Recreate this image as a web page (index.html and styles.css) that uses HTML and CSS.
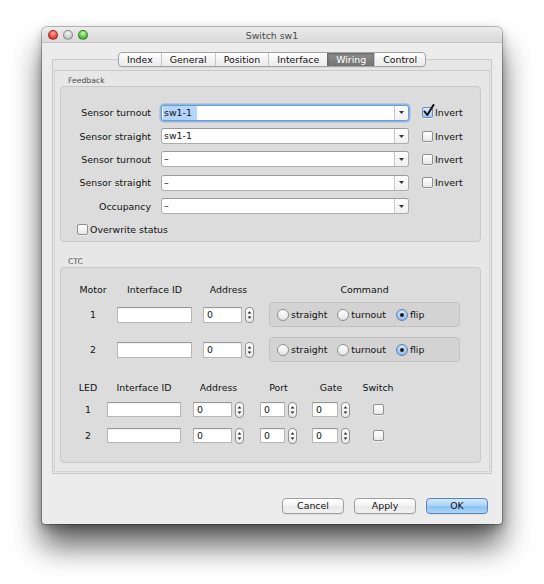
FILE: index.html
```html
<!DOCTYPE html>
<html lang="en">
<head>
    <meta charset="UTF-8">
    <title>Switch sw1</title>
    <link rel="stylesheet" href="styles.css">
</head>
<body>
    <div class="window">
        <!-- title bar -->
        <div class="titlebar">
            <div class="lights">
                <span class="light light-close"></span>
                <span class="light light-min"></span>
                <span class="light light-zoom"></span>
            </div>
            <div class="title">Switch sw1</div>
            <div></div>
        </div>

        <!-- tabs -->
        <div class="tabs">
            <span class="tab">Index</span>
            <span class="tab">General</span>
            <span class="tab">Position</span>
            <span class="tab">Interface</span>
            <span class="tab selected">Wiring</span>
            <span class="tab">Control</span>
        </div>

        <div class="tab-box">
            <div class="tab-content">
                <!-- Feedback -->
                <div class="group-title">Feedback</div>
                <div class="group feedback">
                    <span class="field-label">Sensor turnout</span>
                    <div class="combo focused">
                        <span class="combo-text"><span class="selection">sw1-1</span></span>
                        <span class="combo-arrow"><svg width="5" height="3" viewBox="0 0 5 3"><path d="M0 0H5L2.5 3Z" fill="#333"/></svg></span>
                    </div>
                    <span class="check-row">
                        <span class="checkbox checked"><svg class="check" width="12" height="13" viewBox="0 0 12 13"><path d="M1.5 7.5L4.3 11L10.5 1" fill="none" stroke="#111" stroke-width="2" stroke-linecap="round" stroke-linejoin="round"/></svg></span>Invert
                    </span>

                    <span class="field-label">Sensor straight</span>
                    <div class="combo">
                        <span class="combo-text">sw1-1</span>
                        <span class="combo-arrow"><svg width="5" height="3" viewBox="0 0 5 3"><path d="M0 0H5L2.5 3Z" fill="#333"/></svg></span>
                    </div>
                    <span class="check-row"><span class="checkbox"></span>Invert</span>

                    <span class="field-label">Sensor turnout</span>
                    <div class="combo">
                        <span class="combo-text">–</span>
                        <span class="combo-arrow"><svg width="5" height="3" viewBox="0 0 5 3"><path d="M0 0H5L2.5 3Z" fill="#333"/></svg></span>
                    </div>
                    <span class="check-row"><span class="checkbox"></span>Invert</span>

                    <span class="field-label">Sensor straight</span>
                    <div class="combo">
                        <span class="combo-text">–</span>
                        <span class="combo-arrow"><svg width="5" height="3" viewBox="0 0 5 3"><path d="M0 0H5L2.5 3Z" fill="#333"/></svg></span>
                    </div>
                    <span class="check-row"><span class="checkbox"></span>Invert</span>

                    <span class="field-label">Occupancy</span>
                    <div class="combo">
                        <span class="combo-text">–</span>
                        <span class="combo-arrow"><svg width="5" height="3" viewBox="0 0 5 3"><path d="M0 0H5L2.5 3Z" fill="#333"/></svg></span>
                    </div>
                    <span></span>

                    <span class="check-row overwrite"><span class="checkbox"></span>Overwrite status</span>
                </div>

                <!-- CTC -->
                <div class="group-title ctc-title">CTC</div>
                <div class="group ctc">
                    <div class="motor-grid">
                        <span class="head">Motor</span>
                        <span class="head w-iface">Interface ID</span>
                        <span class="head w-addr">Address</span>
                        <span class="head w-cmd">Command</span>

                        <span class="cell num">1</span>
                        <span class="cell"><span class="textfield w-iface"></span></span>
                        <span class="cell">
                            <span class="number w-addr">
                                <span class="textfield">0</span>
                                <span class="spinner"><svg width="9" height="16" viewBox="0 0 9 16"><path d="M2.6 6.6L4.5 4.2L6.4 6.6Z M2.6 9.4L4.5 11.8L6.4 9.4Z" fill="#222"/></svg></span>
                            </span>
                        </span>
                        <span class="cell">
                            <span class="radio-group">
                                <span class="option"><span class="radio"></span>straight</span>
                                <span class="option"><span class="radio"></span>turnout</span>
                                <span class="option"><span class="radio on"></span>flip</span>
                            </span>
                        </span>

                        <span class="cell num">2</span>
                        <span class="cell"><span class="textfield w-iface"></span></span>
                        <span class="cell">
                            <span class="number w-addr">
                                <span class="textfield">0</span>
                                <span class="spinner"><svg width="9" height="16" viewBox="0 0 9 16"><path d="M2.6 6.6L4.5 4.2L6.4 6.6Z M2.6 9.4L4.5 11.8L6.4 9.4Z" fill="#222"/></svg></span>
                            </span>
                        </span>
                        <span class="cell">
                            <span class="radio-group">
                                <span class="option"><span class="radio"></span>straight</span>
                                <span class="option"><span class="radio"></span>turnout</span>
                                <span class="option"><span class="radio on"></span>flip</span>
                            </span>
                        </span>
                    </div>

                    <div class="led-grid">
                        <span class="head">LED</span>
                        <span class="head l-iface">Interface ID</span>
                        <span class="head l-addr">Address</span>
                        <span class="head l-port">Port</span>
                        <span class="head l-gate">Gate</span>
                        <span class="head l-switch">Switch</span>

                        <span class="cell num">1</span>
                        <span class="cell"><span class="textfield l-iface"></span></span>
                        <span class="cell">
                            <span class="number l-addr">
                                <span class="textfield">0</span>
                                <span class="spinner"><svg width="9" height="16" viewBox="0 0 9 16"><path d="M2.6 6.6L4.5 4.2L6.4 6.6Z M2.6 9.4L4.5 11.8L6.4 9.4Z" fill="#222"/></svg></span>
                            </span>
                        </span>
                        <span class="cell">
                            <span class="number l-port">
                                <span class="textfield">0</span>
                                <span class="spinner"><svg width="9" height="16" viewBox="0 0 9 16"><path d="M2.6 6.6L4.5 4.2L6.4 6.6Z M2.6 9.4L4.5 11.8L6.4 9.4Z" fill="#222"/></svg></span>
                            </span>
                        </span>
                        <span class="cell">
                            <span class="number l-gate">
                                <span class="textfield">0</span>
                                <span class="spinner"><svg width="9" height="16" viewBox="0 0 9 16"><path d="M2.6 6.6L4.5 4.2L6.4 6.6Z M2.6 9.4L4.5 11.8L6.4 9.4Z" fill="#222"/></svg></span>
                            </span>
                        </span>
                        <span class="cell center"><span class="checkbox"></span></span>

                        <span class="cell num">2</span>
                        <span class="cell"><span class="textfield l-iface"></span></span>
                        <span class="cell">
                            <span class="number l-addr">
                                <span class="textfield">0</span>
                                <span class="spinner"><svg width="9" height="16" viewBox="0 0 9 16"><path d="M2.6 6.6L4.5 4.2L6.4 6.6Z M2.6 9.4L4.5 11.8L6.4 9.4Z" fill="#222"/></svg></span>
                            </span>
                        </span>
                        <span class="cell">
                            <span class="number l-port">
                                <span class="textfield">0</span>
                                <span class="spinner"><svg width="9" height="16" viewBox="0 0 9 16"><path d="M2.6 6.6L4.5 4.2L6.4 6.6Z M2.6 9.4L4.5 11.8L6.4 9.4Z" fill="#222"/></svg></span>
                            </span>
                        </span>
                        <span class="cell">
                            <span class="number l-gate">
                                <span class="textfield">0</span>
                                <span class="spinner"><svg width="9" height="16" viewBox="0 0 9 16"><path d="M2.6 6.6L4.5 4.2L6.4 6.6Z M2.6 9.4L4.5 11.8L6.4 9.4Z" fill="#222"/></svg></span>
                            </span>
                        </span>
                        <span class="cell center"><span class="checkbox"></span></span>
                    </div>
                </div>
            </div>
        </div>

        <!-- buttons -->
        <div class="buttons">
            <span class="button">Cancel</span>
            <span class="button">Apply</span>
            <span class="button default">OK</span>
        </div>
    </div>
</body>
</html>
```

FILE: styles.css
```css
html {
    background-color: #fff;
}

body {
    margin: 0;
    padding: 27px 0 60px 42px;
    font-family: "DejaVu Sans", "Liberation Sans", sans-serif;
    font-size: 9.4px;
    color: #111;
}

/* window frame */
.window {
    width: 460px;
    display: flex;
    flex-direction: column;
    padding-bottom: 10px;
    background-color: #ececec;
    border-radius: 5px 5px 3px 3px;
    box-shadow: 0 0 0 1px rgba(0, 0, 0, 0.25), 0 4px 10px rgba(0, 0, 0, 0.28), 0 22px 30px rgba(0, 0, 0, 0.62);
}

.titlebar {
    height: 16px;
    box-sizing: border-box;
    display: grid;
    grid-template-columns: 1fr auto 1fr;
    align-items: center;
    background: linear-gradient(#ececec, #d9d9d9);
    border-bottom: 1px solid #c4c4c4;
    border-radius: 5px 5px 0 0;
}

.lights {
    display: flex;
    gap: 5px;
    padding-left: 6px;
}

.light {
    width: 10px;
    height: 10px;
    box-sizing: border-box;
    border-radius: 50%;
    border: 1px solid rgba(0, 0, 0, 0.3);
}

.light-close {
    background: radial-gradient(circle at 50% 30%, #ffb0a8 0, #ee5a50 45%, #b8231b 100%);
}

.light-min {
    background: radial-gradient(circle at 50% 30%, #f8f8f8 0, #d2d2d2 50%, #a6a6a6 100%);
}

.light-zoom {
    background: radial-gradient(circle at 50% 30%, #d6ffc4 0, #6cce52 45%, #2f8b22 100%);
}

.title {
    color: #4a4a4a;
    font-size: 9.4px;
    padding-top: 1px;
}

/* segmented tabs */
.tabs {
    position: relative;
    z-index: 1;
    align-self: center;
    display: flex;
    height: 15px;
    margin-top: 9px;
    box-sizing: border-box;
    border: 1px solid #a3a3a3;
    border-radius: 4px;
    background: linear-gradient(#ffffff, #f3f3f3 50%, #ebebeb);
    box-shadow: 0 1px 0 rgba(0, 0, 0, 0.06);
}

.tab {
    padding: 0 8px;
    line-height: 13px;
    border-left: 1px solid #c6c6c6;
}

.tab:first-child {
    border-left: none;
}

.tab.selected {
    color: #fff;
    background: linear-gradient(#8e8e8e, #747474);
    border-left-color: #6a6a6a;
    box-shadow: inset 0 1px 2px rgba(0, 0, 0, 0.3);
}

.tab-box {
    margin: -8px 10px 0;
    padding: 10px 1px 1px;
    border: 1px solid #c8c8c8;
    background-color: #e6e6e6;
}

.tab-content {
    padding: 5px 8px 8px 5px;
    border: 1px solid #d2d2d2;
    border-top-color: #c9c9c9;
    background-color: #e7e7e7;
}

/* titled groups */
.group-title {
    height: 10px;
    line-height: 10px;
    padding-left: 8px;
    font-size: 7.7px;
    color: #4d4d4d;
}

.ctc-title {
    margin-top: 15px;
}

.group {
    background-color: #dcdcdc;
    border: 1px solid #c9c9c9;
    border-radius: 4px;
}

.feedback {
    display: grid;
    grid-template-columns: 90px 248px auto;
    grid-auto-rows: 23.4px;
    column-gap: 10px;
    align-items: center;
    padding-top: 14px;
}

.field-label {
    text-align: right;
}

/* combo box */
.combo {
    height: 16px;
    box-sizing: border-box;
    display: flex;
    background-color: #fff;
    border: 1px solid #adadad;
    border-top-color: #999;
    border-radius: 3px;
}

.combo.focused {
    border-color: #6f9bd3;
    box-shadow: 0 0 0 1.5px rgba(120, 170, 230, 0.75);
}

.combo-text {
    flex: 1;
    line-height: 14px;
    padding-left: 2px;
}

.selection {
    display: inline-block;
    padding: 0 5px 0 1px;
    margin-left: -1px;
    background-color: #b5d5fa;
}

.combo-arrow {
    width: 13px;
    display: flex;
    align-items: center;
    justify-content: center;
    border-left: 1px solid #c8c8c8;
    border-radius: 0 3px 3px 0;
    background: linear-gradient(#ffffff, #f0f0f0);
}

/* checkbox */
.check-row {
    display: flex;
    align-items: center;
    gap: 2px;
    margin-left: 3px;
}

.check-row.overwrite {
    grid-column: 1 / -1;
    margin-left: 16px;
}

.checkbox {
    position: relative;
    width: 11px;
    height: 11px;
    box-sizing: border-box;
    border: 1px solid #8f8f8f;
    border-radius: 2px;
    background: linear-gradient(#ffffff, #e8e8e8);
    box-shadow: 0 1px 0 rgba(255, 255, 255, 0.5);
}

.checkbox.checked {
    border-color: #6d8fbf;
    background: linear-gradient(#dcebfc, #a5c9f1);
}

.checkbox .check {
    position: absolute;
    left: 0;
    top: -4px;
}

/* CTC */
.ctc {
    padding: 16px 0 19px 9px;
}

.head {
    align-self: start;
    line-height: 12px;
    text-align: center;
    justify-self: end;
}

.motor-grid .head:first-child,
.led-grid .head:first-child {
    justify-self: stretch;
}

.cell {
    align-self: start;
    display: flex;
    align-items: center;
    justify-content: flex-end;
}

.cell.num {
    justify-content: center;
}

.cell.center {
    justify-content: center;
}

.motor-grid {
    display: grid;
    grid-template-columns: 46px 76px 62px 206px;
    grid-template-rows: 18px 35px 25px;
}

.motor-grid .cell {
    height: 25px;
}

.led-grid {
    display: grid;
    grid-template-columns: 36px 75px 63px 53px 53px 56px;
    grid-template-rows: 20px 26px 15px;
    margin-top: 20px;
}

.led-grid .cell {
    height: 15px;
}

.led-grid .head.l-switch {
    justify-self: center;
}

.w-iface { width: 75px; }
.w-addr { width: 51px; }
.w-cmd { width: 191px; }
.l-iface { width: 74px; }
.l-addr { width: 51px; }
.l-port { width: 37px; }
.l-gate { width: 38px; }

.textfield {
    height: 16px;
    box-sizing: border-box;
    padding-left: 3px;
    line-height: 14px;
    background-color: #fff;
    border: 1px solid #b6b6b6;
    border-top-color: #989898;
    box-shadow: inset 0 1px 1px rgba(0, 0, 0, 0.06);
}

.led-grid .textfield {
    height: 15px;
    line-height: 13px;
}

.number {
    display: flex;
    align-items: center;
    gap: 3px;
}

.number .textfield {
    flex: 1;
}

.spinner {
    display: flex;
    width: 9px;
    height: 16px;
    box-sizing: border-box;
    border: 1px solid #8f8f8f;
    border-radius: 4px;
    background: linear-gradient(#ffffff, #e9e9e9);
}

.spinner svg {
    margin: -1px;
}

/* radio buttons */
.radio-group {
    width: 191px;
    height: 25px;
    box-sizing: border-box;
    display: flex;
    align-items: center;
    gap: 10px;
    padding-left: 7px;
    background-color: #d3d3d3;
    border: 1px solid #c2c2c2;
    border-radius: 4px;
}

.option {
    display: flex;
    align-items: center;
    gap: 2px;
}

.radio {
    width: 12px;
    height: 12px;
    box-sizing: border-box;
    display: flex;
    align-items: center;
    justify-content: center;
    border: 1px solid #8e8e8e;
    border-radius: 50%;
    background: linear-gradient(#ffffff, #e4e4e4);
}

.radio.on {
    border-color: #5f82b4;
    background: radial-gradient(circle at 50% 35%, #e4f0fd 0, #a9cdf3 50%, #6ea6e6 100%);
}

.radio.on::after {
    content: "";
    width: 4px;
    height: 4px;
    border-radius: 50%;
    background-color: #1a1a1a;
}

/* dialog buttons */
.buttons {
    display: flex;
    justify-content: flex-end;
    gap: 10px;
    padding: 24px 14px 0 0;
}

.button {
    width: 62px;
    height: 16px;
    box-sizing: border-box;
    text-align: center;
    line-height: 14px;
    border: 1px solid #9e9e9e;
    border-radius: 4px;
    background: linear-gradient(#ffffff, #f3f3f3 50%, #e9e9e9 51%, #f2f2f2);
    box-shadow: 0 1px 0 rgba(0, 0, 0, 0.06);
}

.button.default {
    border-color: #5a82bb;
    background: linear-gradient(#d2e8fd, #aad1f7 50%, #8ec1f2 51%, #acd4f8);
}
```
